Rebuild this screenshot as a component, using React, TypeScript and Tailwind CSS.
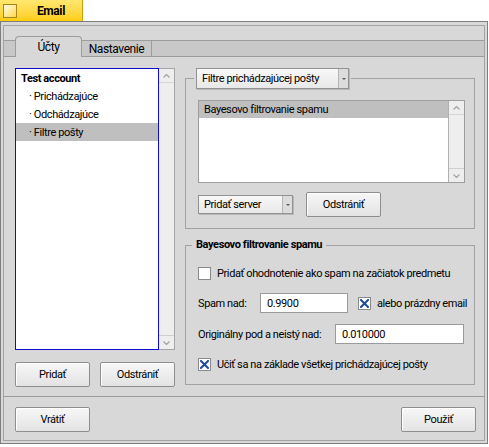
import type { ReactNode } from 'react';

const FONT = "font-['Roboto','Noto_Sans',sans-serif] tracking-[-0.4px]";

function Button({ label, className = '' }: { label: string; className?: string }) {
  return (
    <button
      className={`h-[25px] w-[75px] shrink-0 rounded-[2px] border border-[#8e8e8e] bg-gradient-to-b from-[#f7f7f7] to-[#e3e3e3] text-[11px] leading-none text-black shadow-[inset_1px_1px_0_#ffffff] ${className}`}
    >
      {label}
    </button>
  );
}

function Arrow({ up }: { up?: boolean }) {
  return (
    <svg width="7" height="4" viewBox="0 0 7 4">
      <path d={up ? 'M0.5 3.5 L3.5 0.5 L6.5 3.5' : 'M0.5 0.5 L3.5 3.5 L6.5 0.5'} fill="none" stroke="#a2a2a2" strokeWidth="1.2" />
    </svg>
  );
}

function ScrollBar() {
  return (
    <div className="flex w-[15px] shrink-0 flex-col justify-between bg-[#eeeeee]">
      <div className="flex h-[14px] items-center justify-center border-b border-[#d6d6d6]">
        <Arrow up />
      </div>
      <div className="flex h-[14px] items-center justify-center border-t border-[#cfcfcf]">
        <Arrow />
      </div>
    </div>
  );
}

function Checkbox({ checked }: { checked?: boolean }) {
  return (
    <span className="flex h-[13px] w-[13px] shrink-0 items-center justify-center border border-[#8a8a8a] bg-white">
      {checked && (
        <svg width="9" height="9" viewBox="0 0 9 9">
          <path d="M1 1 L8 8 M8 1 L1 8" stroke="#1f4b96" strokeWidth="2" strokeLinecap="square" />
        </svg>
      )}
    </span>
  );
}

function Dropdown({ label, className = '' }: { label: string; className?: string }) {
  return (
    <div
      className={`flex items-stretch border border-[#929292] bg-gradient-to-b from-[#f8f8f8] to-[#e8e8e8] shadow-[1px_1px_0_#b8b8b8] ${className}`}
    >
      <span className="flex flex-1 items-center whitespace-nowrap pl-[5px] leading-none">{label}</span>
      <span className="flex w-[10px] items-center justify-center border-l border-[#b4b4b4] bg-[#dcdcdc]">
        <svg width="4" height="2" viewBox="0 0 4 2">
          <path d="M0 0 L4 0 L2 2 Z" fill="#5a5a5a" />
        </svg>
      </span>
    </div>
  );
}

function Input({ value, className = '' }: { value: string; className?: string }) {
  return (
    <div className={`flex h-[20px] shrink-0 items-center border border-[#9a9a9a] bg-white pl-[6px] ${className}`}>
      {value}
    </div>
  );
}

function Row({ children, className = '' }: { children: ReactNode; className?: string }) {
  return <div className={`flex h-[20px] items-center whitespace-nowrap ${className}`}>{children}</div>;
}

export default function App() {
  return (
    <div className={`h-[447px] w-[489px] bg-white text-[11px] leading-none text-black ${FONT}`}>
      {/* window tab */}
      <div className="flex h-[21px] w-[83px] items-center border-r border-[#c9a400] bg-gradient-to-b from-[#ffe76e] to-[#ffcd00] pl-[3px]">
        <span className="h-[14px] w-[14px] border border-[#a4861c] bg-gradient-to-br from-[#fffbe2] to-[#ffd633]" />
        <span className="ml-[20px] text-[12px] font-bold">Email</span>
      </div>

      {/* window frame */}
      <div className="h-[423px] w-[488px] border border-[#7f7f7f] bg-[#d8d8d8] px-[2px] pt-[3px] pb-[2px]">
        <div className="flex h-full flex-col border border-[#a4a4a4]">
          {/* tabs */}
          <div className="mt-[10px] flex h-[21px]">
            <div className="h-[17px] w-[11px] self-end border-y border-[#9c9c9c] bg-[#c8c8c8]" />
            <div className="flex h-[21px] w-[67px] items-center justify-center rounded-t-[4px] border-x border-t border-[#9c9c9c] bg-[#d8d8d8] text-[12px]">
              Účty
            </div>
            <div className="flex h-[17px] w-[70px] items-center justify-center self-end border-y border-r border-[#9c9c9c] bg-[#c8c8c8] text-[12px]">
              Nastavenie
            </div>
            <div className="h-[17px] flex-1 self-end border-y border-[#9c9c9c] bg-[#c8c8c8]" />
          </div>

          {/* tab panel */}
          <div className="flex h-[340px] gap-[10px] border-b border-[#9c9c9c] pl-[11px] pt-[11px]">
            {/* accounts column */}
            <div className="flex w-[160px] shrink-0 flex-col">
              <div className="flex h-[282px]">
                <div className="flex-1 whitespace-nowrap border border-[#0c0cd4] bg-white">
                  <div className="flex h-[18px] items-center pl-[5px] font-bold">Test account</div>
                  <div className="flex h-[18px] items-center pl-[13px]">· Prichádzajúce</div>
                  <div className="flex h-[18px] items-center pl-[13px]">· Odchádzajúce</div>
                  <div className="flex h-[18px] items-center bg-[#bfbfbf] pl-[13px]">· Filtre pošty</div>
                </div>
                <div className="flex border-y border-r border-[#a6a6a6]">
                  <ScrollBar />
                </div>
              </div>
              <div className="mt-[12px] flex justify-between">
                <Button label="Pridať" />
                <Button label="Odstrániť" />
              </div>
            </div>

            {/* filters column */}
            <div className="flex w-[290px] shrink-0 flex-col">
              <fieldset className="min-w-0 border border-[#a2a2a2]">
                <legend className="ml-[8px] px-[2px]">
                  <Dropdown label="Filtre prichádzajúcej pošty" className="h-[21px] w-[153px]" />
                </legend>
                <div className="pl-[12px] pr-[9px] pt-[11px] pb-[11px]">
                  <div className="flex h-[83px] border border-[#9e9e9e]">
                    <div className="flex-1 bg-white">
                      <div className="flex h-[17px] items-center bg-[#bfbfbf] pl-[5px]">Bayesovo filtrovanie spamu</div>
                    </div>
                    <div className="flex border-l border-[#b0b0b0]">
                      <ScrollBar />
                    </div>
                  </div>
                  <div className="mt-[9px] flex h-[25px] items-center gap-[13px]">
                    <Dropdown label="Pridať server" className="h-[19px] w-[95px]" />
                    <Button label="Odstrániť" />
                  </div>
                </div>
              </fieldset>

              <fieldset className="mt-[8px] min-w-0 border border-[#a2a2a2]">
                <legend className="ml-[6px] h-[16px] whitespace-nowrap px-[4px] font-bold leading-[16px]">Bayesovo filtrovanie spamu</legend>
                <div className="pl-[12px] pr-[9px] pt-[10px] pb-[10px]">
                  <Row className="gap-[6px]">
                    <Checkbox />
                    <span>Pridať ohodnotenie ako spam na začiatok predmetu</span>
                  </Row>
                  <Row className="mt-[10px]">
                    <span className="w-[62px] shrink-0">Spam nad:</span>
                    <Input value="0.9900" className="w-[88px]" />
                    <span className="ml-[10px]">
                      <Checkbox checked />
                    </span>
                    <span className="ml-[6px]">alebo prázdny email</span>
                  </Row>
                  <Row className="mt-[11px]">
                    <span className="w-[137px] shrink-0">Originálny pod a neistý nad:</span>
                    <Input value="0.010000" className="w-[129px]" />
                  </Row>
                  <Row className="mt-[10px] gap-[6px]">
                    <Checkbox checked />
                    <span>Učiť sa na základe všetkej prichádzajúcej pošty</span>
                  </Row>
                </div>
              </fieldset>
            </div>
          </div>

          {/* bottom buttons */}
          <div className="flex justify-between pl-[11px] pr-[8px] pt-[10px]">
            <Button label="Vrátiť" />
            <Button label="Použiť" />
          </div>
        </div>
      </div>
    </div>
  );
}
